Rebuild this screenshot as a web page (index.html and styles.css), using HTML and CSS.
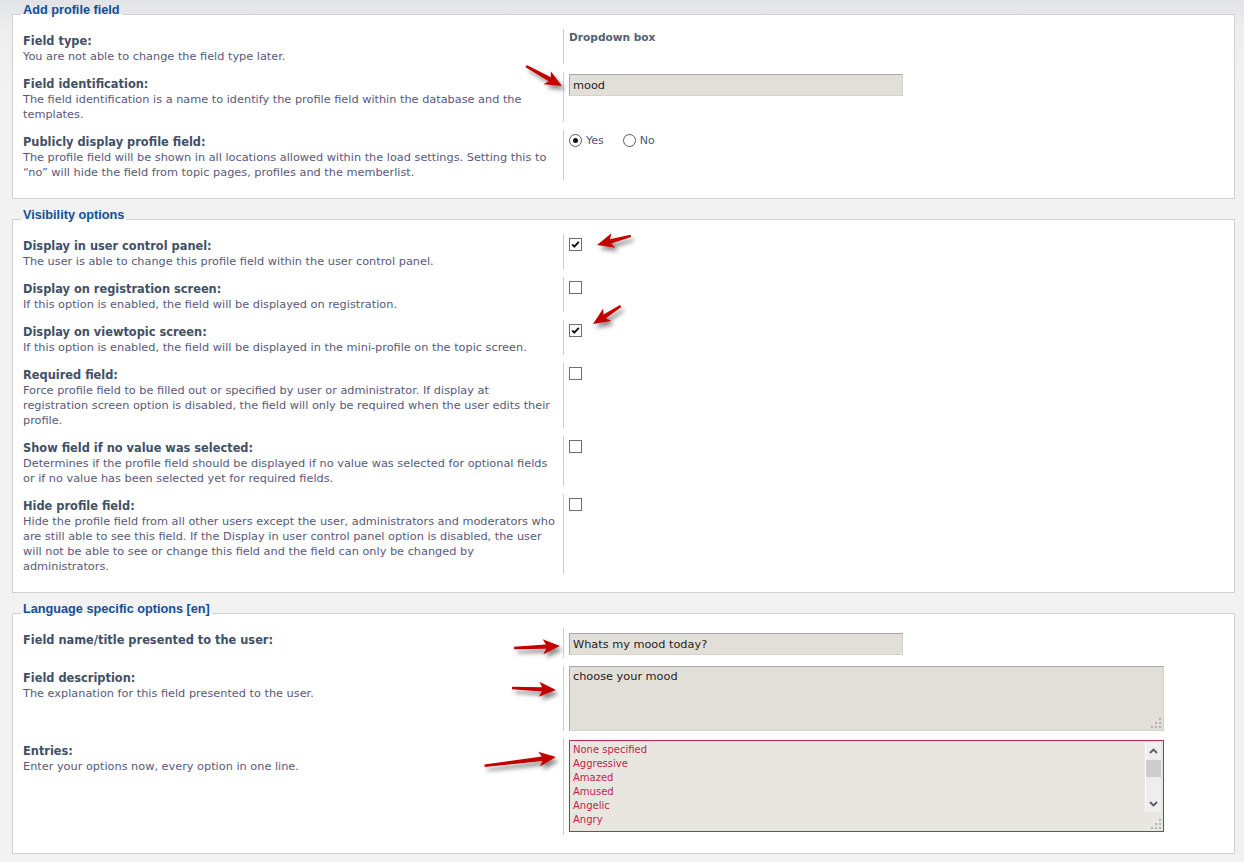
FILE: index.html
```html
<!DOCTYPE html>
<html lang="en">
<head>
    <meta charset="utf-8">
    <title>Add profile field</title>
    <link rel="stylesheet" href="styles.css">
</head>
<body>
<div class="page">

    <fieldset>
        <legend>Add profile field</legend>
        <dl>
            <dt><label>Field type:</label><span class="explain">You are not able to change the field type later.</span></dt>
            <dd><strong class="value">Dropdown box</strong></dd>
        </dl>
        <dl>
            <dt><label for="field_ident">Field identification:</label><span class="explain">The field identification is a name to identify the profile field within the database and the templates.</span></dt>
            <dd><input type="text" id="field_ident" class="inputbox short" value="mood"></dd>
        </dl>
        <dl>
            <dt><label>Publicly display profile field:</label><span class="explain">The profile field will be shown in all locations allowed within the load settings. Setting this to “no” will hide the field from topic pages, profiles and the memberlist.</span></dt>
            <dd>
                <div class="radios">
                    <span class="radio"><span class="radio-dot on"></span>Yes</span>
                    <span class="radio"><span class="radio-dot"></span>No</span>
                </div>
            </dd>
        </dl>
    </fieldset>

    <fieldset>
        <legend>Visibility options</legend>
        <dl>
            <dt><label>Display in user control panel:</label><span class="explain">The user is able to change this profile field within the user control panel.</span></dt>
            <dd><span class="checkbox"><svg width="11" height="11" viewBox="0 0 11 11"><path d="M2.2 5.4 L4.3 7.6 L8.8 2.8" fill="none" stroke="#111" stroke-width="1.9"/></svg></span></dd>
        </dl>
        <dl>
            <dt><label>Display on registration screen:</label><span class="explain">If this option is enabled, the field will be displayed on registration.</span></dt>
            <dd><span class="checkbox"></span></dd>
        </dl>
        <dl>
            <dt><label>Display on viewtopic screen:</label><span class="explain">If this option is enabled, the field will be displayed in the mini-profile on the topic screen.</span></dt>
            <dd><span class="checkbox"><svg width="11" height="11" viewBox="0 0 11 11"><path d="M2.2 5.4 L4.3 7.6 L8.8 2.8" fill="none" stroke="#111" stroke-width="1.9"/></svg></span></dd>
        </dl>
        <dl>
            <dt><label>Required field:</label><span class="explain">Force profile field to be filled out or specified by user or administrator. If display at registration screen option is disabled, the field will only be required when the user edits their profile.</span></dt>
            <dd><span class="checkbox"></span></dd>
        </dl>
        <dl>
            <dt><label>Show field if no value was selected:</label><span class="explain">Determines if the profile field should be displayed if no value was selected for optional fields or if no value has been selected yet for required fields.</span></dt>
            <dd><span class="checkbox"></span></dd>
        </dl>
        <dl>
            <dt><label>Hide profile field:</label><span class="explain">Hide the profile field from all other users except the user, administrators and moderators who are still able to see this field. If the Display in user control panel option is disabled, the user will not be able to see or change this field and the field can only be changed by administrators.</span></dt>
            <dd><span class="checkbox"></span></dd>
        </dl>
    </fieldset>

    <fieldset>
        <legend>Language specific options [en]</legend>
        <dl>
            <dt><label for="lang_name">Field name/title presented to the user:</label></dt>
            <dd class="input-row"><input type="text" id="lang_name" class="inputbox short" value="Whats my mood today?"></dd>
        </dl>
        <dl>
            <dt><label>Field description:</label><span class="explain">The explanation for this field presented to the user.</span></dt>
            <dd>
                <div class="textarea">
                    <div class="textarea-text">choose your mood</div>
                    <div class="textarea-side">
                        <svg class="grip" width="10" height="10" viewBox="0 0 10 10"><path d="M8 0h2v2h-2zM4 4h2v2h-2zM8 4h2v2h-2zM0 8h2v2h-2zM4 8h2v2h-2zM8 8h2v2h-2z" fill="#b3b3b3"/></svg>
                    </div>
                </div>
            </dd>
        </dl>
        <dl>
            <dt><label>Entries:</label><span class="explain">Enter your options now, every option in one line.</span></dt>
            <dd>
                <div class="textarea entries">
                    <div class="textarea-text">
                        None specified<br>
                        Aggressive<br>
                        Amazed<br>
                        Amused<br>
                        Angelic<br>
                        Angry
                    </div>
                    <div class="textarea-side">
                        <div class="scrollbar">
                            <span class="scroll-btn"><svg width="9" height="6" viewBox="0 0 9 6"><path d="M1 5 L4.5 1.5 L8 5" fill="none" stroke="#5c5c5c" stroke-width="1.8"/></svg></span>
                            <span class="scroll-thumb"></span>
                            <span class="scroll-track"></span>
                            <span class="scroll-btn"><svg width="9" height="6" viewBox="0 0 9 6"><path d="M1 1 L4.5 4.5 L8 1" fill="none" stroke="#5c5c5c" stroke-width="1.8"/></svg></span>
                        </div>
                        <svg class="grip" width="10" height="10" viewBox="0 0 10 10"><path d="M8 0h2v2h-2zM4 4h2v2h-2zM8 4h2v2h-2zM0 8h2v2h-2zM4 8h2v2h-2zM8 8h2v2h-2z" fill="#b3b3b3"/></svg>
                    </div>
                </div>
            </dd>
        </dl>
    </fieldset>

    <!-- annotation arrows drawn over the form -->
    <svg class="arrows" width="1244" height="862" viewBox="0 0 1244 862">
        <defs>
            <filter id="shadow" x="-50%" y="-50%" width="200%" height="200%">
                <feDropShadow dx="3" dy="4" stdDeviation="2" flood-color="#000" flood-opacity="0.45"/>
            </filter>
        </defs>
        <g fill="#c20000" filter="url(#shadow)">
            <path transform="translate(562 86) rotate(29)" d="M0 0 L-17 -7.5 L-14 -2.2 L-41 -1.2 L-41 1.2 L-14 2.2 L-17 7.5 Z"/>
            <path transform="translate(597 245) rotate(165)" d="M0 0 L-17 -7.5 L-14 -2.2 L-35 -1.2 L-35 1.2 L-14 2.2 L-17 7.5 Z"/>
            <path transform="translate(593 324) rotate(147)" d="M0 0 L-17 -7.5 L-14 -2.2 L-33 -1.2 L-33 1.2 L-14 2.2 L-17 7.5 Z"/>
            <path transform="translate(560 646) rotate(-2.5)" d="M0 0 L-17 -7.5 L-14 -2.2 L-46 -1.2 L-46 1.2 L-14 2.2 L-17 7.5 Z"/>
            <path transform="translate(556 690) rotate(2.6)" d="M0 0 L-17 -7.5 L-14 -2.2 L-44 -1.2 L-44 1.2 L-14 2.2 L-17 7.5 Z"/>
            <path transform="translate(556 757) rotate(-7)" d="M0 0 L-17 -7.5 L-14 -2.2 L-72 -1.2 L-72 1.2 L-14 2.2 L-17 7.5 Z"/>
        </g>
    </svg>
</div>
</body>
</html>
```

FILE: styles.css
```css
body {
    margin: 0;
    background: linear-gradient(to bottom, #e2e3e7 0, #eeeeef 30px, #f2f2f2 90px);
    font-family: "DejaVu Sans", Verdana, sans-serif;
    font-size: 11.3px;
    line-height: 15px;
    color: #425067;
}

.page {
    position: relative;
    padding: 4px 9px 1px 12px;
}

fieldset {
    margin: 0 0 10px;
    padding: 0 9px 15px 10px;
    border: 1px solid #d2d2d2;
    background: #fff;
}

legend {
    margin-left: -2px;
    padding: 0 2px 8px;
    font-family: "Liberation Sans", Arial, sans-serif;
    font-size: 12.7px;
    font-weight: bold;
    line-height: 12px;
    color: #115098;
}

dl {
    display: flex;
    margin: 0;
    padding: 5px 0 3px;
}

dt {
    flex: none;
    width: 533px;
    padding: 5px 7px 0 0;
    border-right: 1px solid #cccccc;
}

dt label {
    display: block;
    font-size: 11.4px;
    font-weight: bold;
    color: #425067;
}

dt .explain {
    display: block;
    color: #57597b;
}

dd {
    flex: 1;
    margin: 0;
    padding-left: 5px;
}

dd.input-row {
    padding-top: 3px;
    padding-bottom: 3px;
}

.value {
    display: block;
    padding-top: 1px;
    font-size: 10.6px;
    color: #536175;
}

.inputbox {
    box-sizing: border-box;
    display: block;
    height: 22px;
    margin-top: 2px;
    padding: 0 3px;
    border: 1px solid;
    border-color: #a8a8a8 #d6d3c8 #d6d3c8 #a8a8a8;
    background: #e2dfd8;
    font-family: "DejaVu Sans", Verdana, sans-serif;
    font-size: 11.3px;
    color: #222;
    outline: none;
}

.inputbox.short {
    width: 334px;
}

/* radios */
.radios {
    display: flex;
    align-items: center;
    padding-top: 4px;
}

.radio {
    display: flex;
    align-items: center;
    margin-right: 19px;
    font-size: 11px;
    line-height: 13px;
    color: #4c5777;
}

.radio-dot {
    display: flex;
    align-items: center;
    justify-content: center;
    width: 11px;
    height: 11px;
    margin-right: 4px;
    border: 1px solid #5a5a5a;
    border-radius: 50%;
    background: #fff;
}

.radio-dot.on::after {
    content: "";
    width: 5px;
    height: 5px;
    border-radius: 50%;
    background: #111;
}

/* checkboxes */
.checkbox {
    display: block;
    width: 11px;
    height: 11px;
    margin-top: 4px;
    border: 1px solid #6e6e6e;
    background: #fff;
}

.checkbox svg {
    display: block;
}

/* textareas */
.textarea {
    display: flex;
    width: 593px;
    height: 63px;
    border: 1px solid;
    border-color: #a8a8a8 #d6d3c8 #d6d3c8 #a8a8a8;
    background: #e2dfd8;
}

.textarea-text {
    flex: 1;
    overflow: hidden;
    padding: 3px 3px;
    font-size: 11.3px;
    line-height: 14px;
    color: #222;
}

.textarea-side {
    display: flex;
    flex-direction: column;
    justify-content: flex-end;
    align-items: flex-end;
    width: 16px;
    margin: 1px 2px 2px 0;
}

.grip {
    display: block;
}

.entries {
    height: 90px;
    margin-top: 1px;
    margin-bottom: 3px;
    border-color: #bc2a4d;
    background: #e8e6df;
}

.entries .textarea-text {
    padding: 2px 3px;
    font-size: 10px;
    line-height: 14px;
    color: #c4234e;
}

.scrollbar {
    display: flex;
    flex-direction: column;
    box-sizing: border-box;
    width: 16px;
    height: 70px;
    margin-bottom: auto;
    border-left: 1px solid #fff;
    background: #eeeeee;
}

.scroll-btn {
    display: flex;
    align-items: center;
    justify-content: center;
    height: 17px;
}

.scroll-btn svg {
    display: block;
}

.scroll-thumb {
    height: 17px;
    margin-top: 1px;
    background: #cdcdcd;
}

.scroll-track {
    flex: 1;
}

.arrows {
    position: absolute;
    top: 0;
    left: 0;
    pointer-events: none;
}
```
